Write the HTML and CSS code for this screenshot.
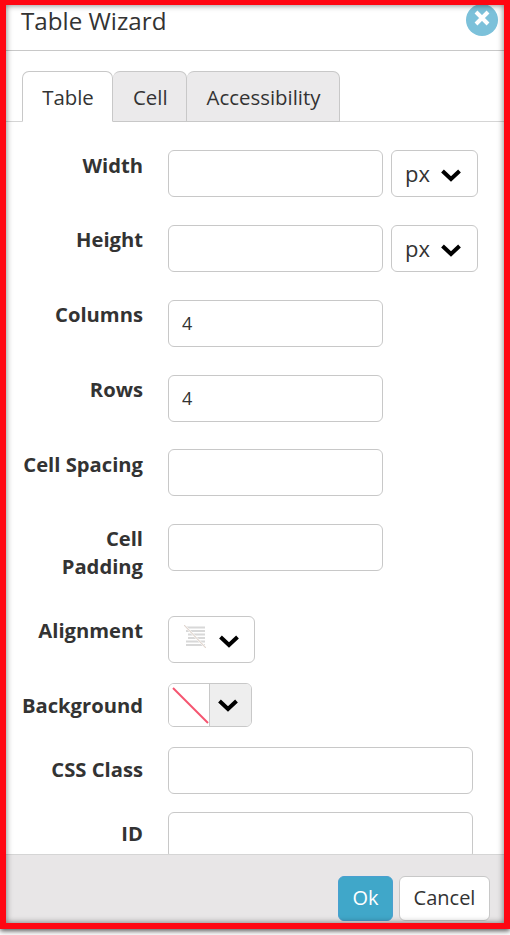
FILE: index.html
```html
<!DOCTYPE html>
<html lang="en">
<head>
  <meta charset="UTF-8">
  <meta name="viewport" content="width=device-width, initial-scale=1.0">
  <title>Table Wizard</title>
  <link rel="stylesheet" href="styles.css">
</head>
<body>
  <div class="frame">
    <div class="header">
      <h1>Table Wizard</h1>
      <button class="close" aria-label="Close">
        <svg width="18" height="18" viewBox="0 0 18 18"><path d="M3 3L15 15M15 3L3 15" stroke="#fff" stroke-width="4" fill="none"/></svg>
      </button>
    </div>

    <div class="tabs">
      <div class="tab active">Table</div>
      <div class="tab">Cell</div>
      <div class="tab">Accessibility</div>
    </div>

    <div class="form">
      <div class="row drop">
        <label>Width</label>
        <input type="text" class="field">
        <div class="select">
          <span>px</span>
          <svg class="chevron" width="22" height="14" viewBox="0 0 22 14"><path d="M2.5 3L11 11L19.5 3" stroke="#000" stroke-width="4" fill="none"/></svg>
        </div>
      </div>
      <div class="row">
        <label>Height</label>
        <input type="text" class="field">
        <div class="select">
          <span>px</span>
          <svg class="chevron" width="22" height="14" viewBox="0 0 22 14"><path d="M2.5 3L11 11L19.5 3" stroke="#000" stroke-width="4" fill="none"/></svg>
        </div>
      </div>
      <div class="row">
        <label>Columns</label>
        <input type="text" class="field" value="4">
      </div>
      <div class="row tight">
        <label>Rows</label>
        <input type="text" class="field" value="4">
      </div>
      <div class="row drop">
        <label>Cell Spacing</label>
        <input type="text" class="field">
      </div>
      <div class="row">
        <label class="two-line">Cell Padding</label>
        <input type="text" class="field">
      </div>
      <div class="row compact">
        <label>Alignment</label>
        <div class="select align-select">
          <svg class="align-icon" width="22" height="23" viewBox="0 0 22 23">
            <path d="M2 2.5H21M2 6H21M4 9.5H21M4 13H21M2 16.5H21M2 20H21" stroke="#d8d8d8" stroke-width="2" fill="none"/>
            <path d="M0 0L22 23" stroke="#fff" stroke-width="2" fill="none"/>
            <path d="M0 0L22 23" stroke="#e0d6cf" stroke-width="1.2" fill="none"/>
          </svg>
          <svg class="chevron" width="22" height="14" viewBox="0 0 22 14"><path d="M2.5 3L11 11L19.5 3" stroke="#000" stroke-width="4" fill="none"/></svg>
        </div>
      </div>
      <div class="row compact low">
        <label>Background</label>
        <div class="color-picker">
          <div class="swatch">
            <svg width="40" height="42" viewBox="0 0 40 42"><path d="M4 4L39 39" stroke="#f55570" stroke-width="2" fill="none"/></svg>
          </div>
          <div class="color-arrow">
            <svg class="chevron" width="22" height="14" viewBox="0 0 22 14"><path d="M2.5 3L11 11L19.5 3" stroke="#000" stroke-width="4" fill="none"/></svg>
          </div>
        </div>
      </div>
      <div class="row compact last low">
        <label>CSS Class</label>
        <input type="text" class="field wide">
      </div>
      <div class="row low id-row">
        <label>ID</label>
        <input type="text" class="field wide">
      </div>
    </div>

    <div class="footer">
      <button class="btn primary">Ok</button>
      <button class="btn">Cancel</button>
    </div>
  </div>
</body>
</html>
```

FILE: styles.css
```css
* {
  margin: 0;
  padding: 0;
  box-sizing: border-box;
}

body {
  font-family: "Open Sans", Arial, sans-serif;
  color: #333;
  background: #fff;
  height: 935px;
  overflow: hidden;
}

.frame {
  position: relative;
  height: 929px;
  display: flex;
  flex-direction: column;
  overflow: hidden;
  background: #fff;
  border: solid #ff0612;
  border-width: 5px 6px 6px 6px;
  box-shadow: 0 2px 5px #555;
}

.frame::after {
  content: "";
  position: absolute;
  inset: 0;
  pointer-events: none;
  box-shadow: inset 0 0 6px rgba(0, 0, 0, 0.55);
}

/* Header */
.header {
  position: relative;
  flex: none;
  height: 46px;
  padding-left: 15px;
  border-bottom: 1px solid #c8c8c8;
}

h1 {
  font-size: 24.2px;
  font-weight: 400;
  line-height: 32px;
}

.close {
  position: absolute;
  top: -1px;
  right: 6px;
  width: 32px;
  height: 32px;
  border: none;
  border-radius: 50%;
  background: #7cc1da;
  display: flex;
  align-items: center;
  justify-content: center;
  padding-bottom: 5px;
}

/* Tabs */
.tabs {
  flex: none;
  display: flex;
  height: 71px;
  padding: 20px 0 0 16px;
  border-bottom: 1px solid #d5d5d5;
}

.tab {
  height: 51px;
  padding: 0 19px 0 20px;
  font-size: 20.4px;
  line-height: 51px;
  background: #ebeaeb;
  border: 1px solid #c8c8c8;
  border-left-width: 0;
  border-radius: 7px 7px 0 0;
}

.tab:first-child {
  border-left-width: 1px;
}

.tab:nth-child(2) {
  padding: 0 18px 0 20px;
}

.tab.active {
  width: 91px;
  text-align: center;
  padding: 0 0 0 1px;
  background: #fff;
  border-bottom-color: #fff;
}

/* Form */
.form {
  flex: 1;
  min-height: 0;
  overflow: hidden;
  padding-top: 28px;
}

.row {
  display: flex;
  align-items: flex-start;
  margin-bottom: 28px;
}

.row.tight {
  margin-bottom: 27px;
}

.row.compact {
  margin-bottom: 20px;
}

.row.last {
  margin-bottom: 18px;
}

label {
  flex: none;
  width: 137px;
  margin-right: 25px;
  font-size: 20.2px;
  font-weight: 700;
  line-height: 28px;
  text-align: right;
}

.row.drop label {
  padding-top: 1px;
}

.row.low label {
  padding-top: 8px;
}

.row.id-row label {
  padding-top: 7px;
}

label.two-line {
  padding-left: 40px;
  margin-bottom: 8px;
}

.field {
  width: 215px;
  height: 47px;
  padding: 0 13px 2px;
  font: 18px "Open Sans", Arial, sans-serif;
  color: #333;
  background: #fff;
  border: 1px solid #c8c8c8;
  border-radius: 6px;
  outline: none;
}

.field.wide {
  width: 305px;
}

.select {
  width: 87px;
  height: 47px;
  margin-left: 8px;
  padding-left: 13px;
  display: flex;
  align-items: center;
  font-size: 22px;
  background: #fff;
  border: 1px solid #c8c8c8;
  border-radius: 6px;
}

.select span {
  margin-top: -2px;
}

.select .chevron {
  margin-left: 10px;
  margin-top: 2px;
}

.align-select {
  margin-left: 0;
  padding-left: 15px;
}

.align-icon {
  margin-top: -6px;
}

.align-select .chevron {
  margin-left: 12px;
}

.color-picker {
  width: 84px;
  height: 44px;
  display: flex;
  border: 1px solid #c8c8c8;
  border-radius: 6px;
  overflow: hidden;
}

.swatch {
  width: 41px;
  background: #fff;
  border-right: 1px solid #c8c8c8;
}

.swatch svg {
  display: block;
}

.color-arrow {
  flex: 1;
  display: flex;
  align-items: center;
  justify-content: center;
  padding-right: 5px;
  background: #eee;
}

/* Footer */
.footer {
  flex: none;
  height: 69px;
  padding: 21px 14px 0 0;
  display: flex;
  justify-content: flex-end;
  align-items: flex-start;
  gap: 6px;
  background: #e8e6e7;
  border-top: 1px solid #d5d5d5;
}

.btn {
  height: 45px;
  width: 91px;
  padding-bottom: 2px;
  font: 20px "Open Sans", Arial, sans-serif;
  color: #333;
  background: #fff;
  border: 1px solid #c8c8c8;
  border-radius: 6px;
}

.btn.primary {
  width: 55px;
  color: #fff;
  background: #40a7c9;
  border-color: #4a9fd0;
}
```
